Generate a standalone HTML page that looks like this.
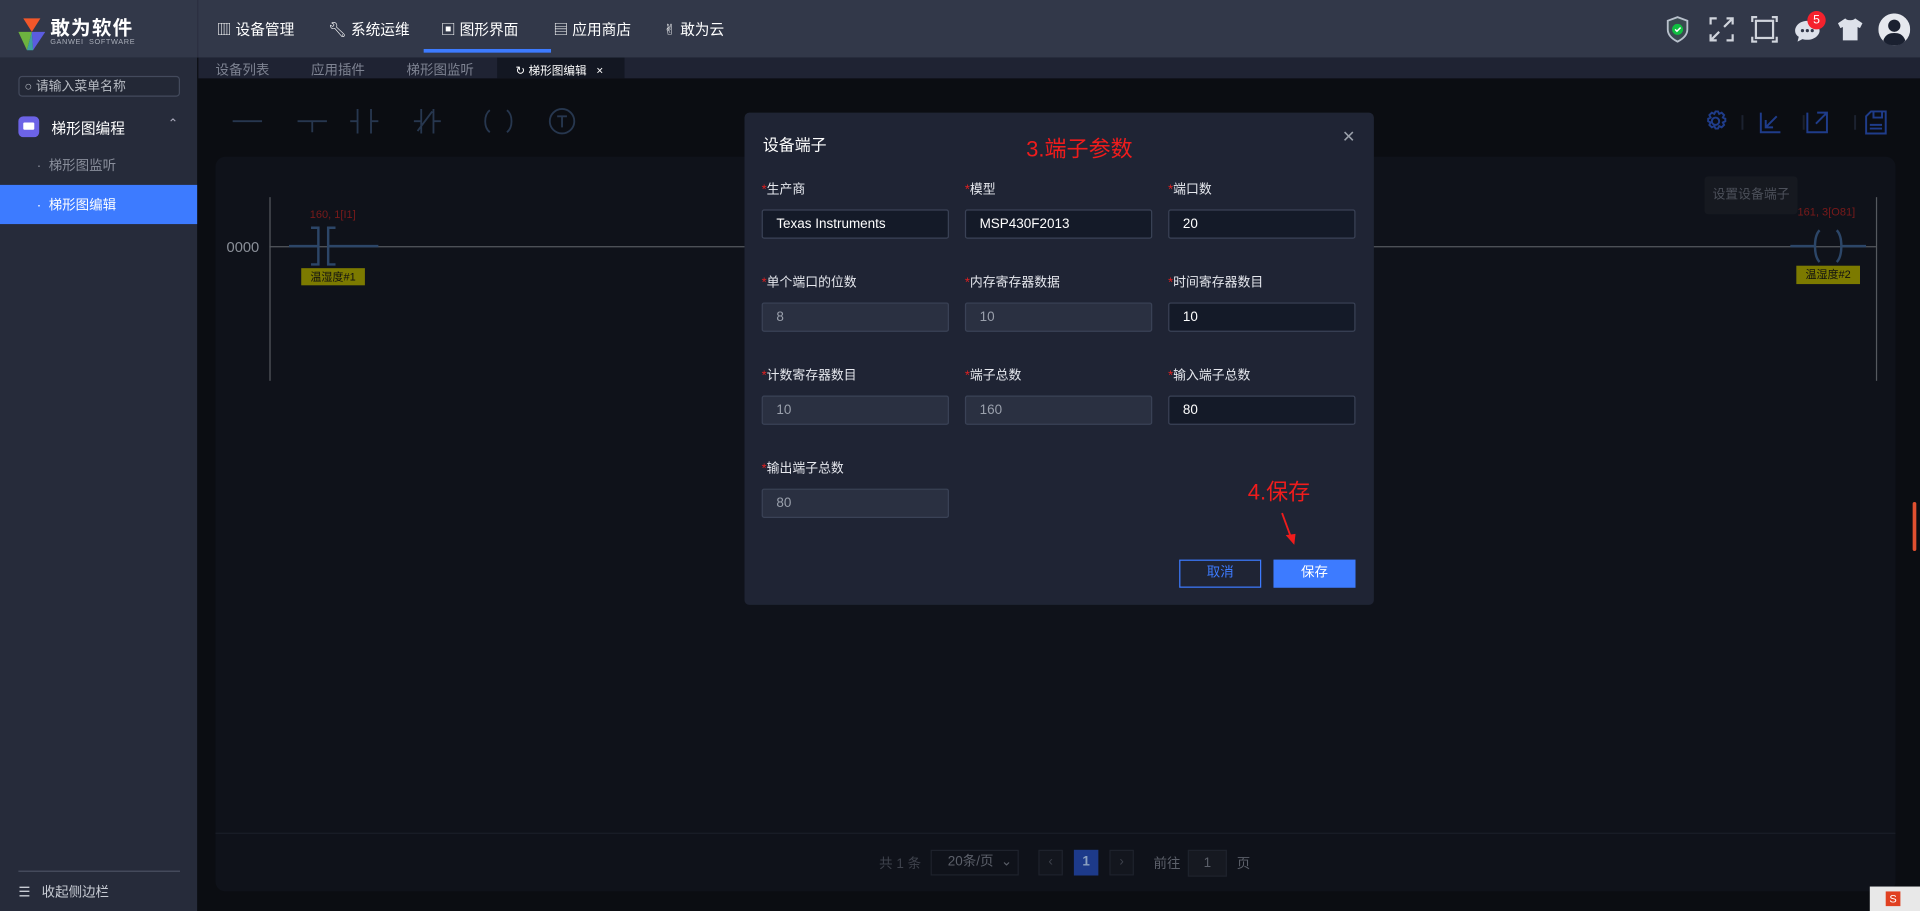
<!DOCTYPE html>
<html><head><meta charset="utf-8"><style>
*{box-sizing:border-box;margin:0;padding:0}
html,body{width:1920px;height:911px;overflow:hidden;background:#0b0d12;font-family:"Liberation Sans","Noto Sans CJK SC",sans-serif}
#w{position:absolute;left:0;top:0;width:1568px;height:744px;transform:scale(1.22449);transform-origin:0 0;background:#0b0d12;overflow:hidden}
.a{position:absolute}
.t{position:absolute;white-space:nowrap}
.nav{color:#fff;font-size:12px;top:15px}
.lab{font-size:10.5px;color:#e6e8ee}
.lab b{color:#e02020;font-weight:normal}
.in{position:absolute;width:153px;height:24px;border:1px solid #3a4256;border-radius:2px;font-size:11px;padding-left:11px;line-height:22px}
.ed{background:#141a28;color:#fff}
.ds{background:#2a3041;color:#9aa0ac}
</style></head><body><div id="w">
<!-- top bar -->
<div class="a" style="left:0;top:0;width:1568px;height:47px;background:#323849"></div>
<div class="a" style="left:161px;top:0;width:1px;height:47px;background:#2b3040"></div>
<svg class="a" style="left:15px;top:13px" width="22" height="30" viewBox="0 0 22 30"><polygon points="4,2 18,2 11,13" fill="#f2572a"/><polygon points="0,13 11,13 7,28" fill="#6db33f"/><polygon points="11,13 22,13 12,28" fill="#5b5ce0"/><polygon points="7,28 11,13 12,28" fill="#3ea0a0"/></svg>
<div class="t" style="left:41px;top:9px;color:#fff;font-size:16px;font-weight:bold;letter-spacing:1px">敢为软件</div>
<div class="t" style="left:41px;top:32px;color:#a8adb8;font-size:6px;letter-spacing:.5px">GANWEI&nbsp; SOFTWARE</div>
<div class="t nav" style="left:177px">▥ 设备管理</div>
<div class="t nav" style="left:268px">🔧︎ 系统运维</div>
<div class="t nav" style="left:360px">▣ 图形界面</div>
<div class="t nav" style="left:452px">▤ 应用商店</div>
<div class="t nav" style="left:542px">✌︎ 敢为云</div>
<div class="a" style="left:346px;top:40px;width:104px;height:3px;background:#3d7bff"></div>
<!-- right icons -->
<svg class="a" style="left:1360px;top:13px" width="20" height="22" viewBox="0 0 20 22"><path d="M10 1 L18 4 V11 C18 16 14 19 10 21 C6 19 2 16 2 11 V4 Z" fill="#3a4a50" stroke="#b8c0cc" stroke-width="1.5"/><circle cx="10" cy="11" r="4.5" fill="#10c040"/><path d="M8 11 l1.5 1.5 3-3" stroke="#fff" fill="none" stroke-width="1.2"/></svg>
<svg class="a" style="left:1395px;top:13px" width="22" height="22" viewBox="0 0 22 22" fill="none" stroke="#d0d4dc" stroke-width="1.8"><path d="M2 7V2h5M15 2h5v5M20 15v5h-5M7 20H2v-5M13 9l6-6M9 13l-6 6"/></svg>
<svg class="a" style="left:1430px;top:13px" width="22" height="22" viewBox="0 0 22 22" fill="none" stroke="#d0d4dc" stroke-width="1.8"><rect x="4" y="4" width="14" height="14"/><path d="M1 5V1h4M17 1h4v4M21 17v4h-4M5 21H1v-4"/></svg>
<svg class="a" style="left:1465px;top:14px" width="22" height="22" viewBox="0 0 22 22"><path d="M11 3C5 3 1 7 1 11c0 2 1 4 3 5l-1 4 4-2c1 .3 2 .5 4 .5 6 0 10-4 10-7.5S17 3 11 3z" fill="#dde1ea"/><circle cx="7" cy="11" r="1.3" fill="#323849"/><circle cx="11" cy="11" r="1.3" fill="#323849"/><circle cx="15" cy="11" r="1.3" fill="#323849"/></svg>
<div class="a" style="left:1476px;top:9px;width:15px;height:15px;border-radius:50%;background:#f5222d;color:#fff;font-size:10px;text-align:center;line-height:15px">5</div>
<svg class="a" style="left:1500px;top:14px" width="22" height="20" viewBox="0 0 22 20"><path d="M7 1 L1 5 L3 9 L5 8 V19 H17 V8 L19 9 L21 5 L15 1 C14 3 8 3 7 1Z" fill="#dde1ea"/></svg>
<svg class="a" style="left:1534px;top:11px" width="26" height="26" viewBox="0 0 26 26"><circle cx="13" cy="13" r="13" fill="#e6e8ee"/><circle cx="13" cy="10" r="5" fill="#1a2030"/><path d="M4 22c2-5 5-6 9-6s7 1 9 6c-2 3-5 4-9 4s-7-1-9-4z" fill="#1a2030"/></svg>
<!-- sidebar -->
<div class="a" style="left:0;top:47px;width:161px;height:697px;background:#262b3a"></div>
<div class="a" style="left:15px;top:62px;width:132px;height:17px;border:1px solid #434a5c;border-radius:3px;background:#232836"></div>
<div class="t" style="left:20px;top:63px;color:#b8bcc4;font-size:10.5px">○ 请输入菜单名称</div>
<div class="a" style="left:15px;top:95px;width:17px;height:17px;border-radius:4px;background:#6c63e6"></div>
<div class="a" style="left:19px;top:100px;width:9px;height:6px;border-radius:1px;background:#fff"></div>
<div class="t" style="left:42px;top:96px;color:#fff;font-size:12px">梯形图编程</div>
<div class="t" style="left:137px;top:96px;color:#aab;font-size:10px">⌃</div>
<div class="t" style="left:30px;top:127px;color:#8a8f9c;font-size:11px">·&nbsp; 梯形图监听</div>
<div class="a" style="left:0;top:151px;width:161px;height:32px;background:#3d7bff"></div>
<div class="t" style="left:30px;top:159px;color:#fff;font-size:11px">·&nbsp; 梯形图编辑</div>
<div class="a" style="left:15px;top:711px;width:132px;height:1px;background:#4a5062"></div>
<div class="t" style="left:15px;top:720px;color:#c8ccd4;font-size:11px">☰&nbsp;&nbsp; 收起侧边栏</div>
<!-- tabs -->
<div class="a" style="left:162px;top:47px;width:1406px;height:17px;background:#1f2333"></div>
<div class="t" style="left:176px;top:49px;color:#7e8392;font-size:11px">设备列表</div>
<div class="t" style="left:254px;top:49px;color:#7e8392;font-size:11px">应用插件</div>
<div class="t" style="left:332px;top:49px;color:#7e8392;font-size:11px">梯形图监听</div>
<div class="a" style="left:406px;top:47px;width:104px;height:17px;background:#131722"></div>
<div class="t" style="left:421px;top:50px;color:#fff;font-size:9.5px">↻ 梯形图编辑&nbsp;&nbsp; ×</div>
<!-- toolbar -->
<svg class="a" style="left:186px;top:88px" width="300" height="22" viewBox="0 0 300 22" fill="none" stroke="#27374f" stroke-width="1.5"><path d="M4 11h24M57 11h24M69 11v9M106 1v20M100 11h6M117 1v20M117 11h6M158 1v20M168 1v20M152 11h6M168 11h6M155 19l12-16M214 2c-5 4-5 14 0 18M228 2c5 4 5 14 0 18"/><circle cx="273" cy="11" r="10"/><path d="M269 7h8M273 7v9"/></svg>
<svg class="a" style="left:1390px;top:88px" width="152" height="24" viewBox="0 0 152 24" fill="none" stroke="#1f3c8a" stroke-width="1.6"><circle cx="11" cy="11" r="3"/><path d="M11 3l2 0 1 2 2-1 2 2-1 2 2 1v2l-2 1 1 2-2 2-2-1-1 2h-2l-1-2-2 1-2-2 1-2-2-1v-2l2-1-1-2 2-2 2 1z"/><path d="M48 4v16h16M52 16l9-9M52 10v6h6M86 4v16h16V10M94 4h8v8M102 4l-9 9M138 3h12v18h-16V7zM140 3v5h7V3M137 14h10M137 17h10"/><path d="M33 6v12M83 6v12M125 6v12" stroke="#1c2230"/></svg>
<!-- canvas -->
<div class="a" style="left:176px;top:128px;width:1372px;height:600px;background:#0f121a;border-radius:8px"></div>
<div class="a" style="left:176px;top:680px;width:1372px;height:1px;background:#1a1e28"></div>
<div class="a" style="left:220px;top:161px;width:1px;height:150px;background:#55595f"></div>
<div class="a" style="left:220px;top:201px;width:1312px;height:1px;background:#55595f"></div>
<div class="a" style="left:1532px;top:161px;width:1px;height:150px;background:#55595f"></div>
<div class="t" style="left:185px;top:195px;color:#8a8f98;font-size:12px">0000</div>
<svg class="a" style="left:236px;top:185px" width="80" height="32" viewBox="0 0 80 32" fill="none" stroke="#2c4668" stroke-width="2"><path d="M0 16h24M18 1h6v30h-6M38 1h-6v30h6M32 16h41"/></svg>
<div class="t" style="left:253px;top:170px;color:#7a1a1a;font-size:9px">160, 1[I1]</div>
<div class="a" style="left:246px;top:219px;width:52px;height:14px;background:#7c7a00;color:#111;font-size:9px;text-align:center;line-height:14px">温湿度#1</div>
<svg class="a" style="left:1462px;top:185px" width="62" height="32" viewBox="0 0 62 32" fill="none" stroke="#2c4668" stroke-width="2"><path d="M0 16h20M42 16h20M24 3c-5 5-5 21 0 26M38 3c5 5 5 21 0 26"/></svg>
<div class="t" style="left:1468px;top:168px;color:#7a1a1a;font-size:9px">161, 3[O81]</div>
<div class="a" style="left:1467px;top:217px;width:52px;height:15px;background:#7c7a00;color:#111;font-size:9px;text-align:center;line-height:15px">温湿度#2</div>
<div class="a" style="left:1392px;top:144px;width:76px;height:31px;background:#161920;border-radius:3px;color:#4c505a;font-size:10.5px;text-align:center;line-height:31px">设置设备端子</div>
<!-- pagination -->
<div class="t" style="left:718px;top:697px;color:#3e424c;font-size:11px">共 1 条</div>
<div class="a" style="left:760px;top:694px;width:72px;height:21px;border:1px solid #1e222c;color:#5c606a;font-size:11px;line-height:19px;padding-left:13px">20条/页 &nbsp;⌄</div>
<div class="a" style="left:848px;top:694px;width:20px;height:21px;border:1px solid #1e222c;background:#13161e;color:#3e424c;font-size:11px;text-align:center;line-height:19px">‹</div>
<div class="a" style="left:877px;top:694px;width:20px;height:21px;background:#1d3a8a;color:#8ba0c0;font-size:11px;text-align:center;line-height:21px;font-weight:bold">1</div>
<div class="a" style="left:906px;top:694px;width:20px;height:21px;border:1px solid #1e222c;background:#13161e;color:#3e424c;font-size:11px;text-align:center;line-height:19px">›</div>
<div class="t" style="left:942px;top:697px;color:#5c606a;font-size:11px">前往</div>
<div class="a" style="left:970px;top:694px;width:32px;height:22px;background:#161921;border:1px solid #1e222c;color:#5c606a;font-size:11px;text-align:center;line-height:20px">1</div>
<div class="t" style="left:1010px;top:697px;color:#5c606a;font-size:11px">页</div>
<div class="a" style="left:1562px;top:410px;width:3px;height:40px;background:#e05030;border-radius:2px"></div>
<div class="a" style="left:1527px;top:724px;width:41px;height:20px;background:#e8e8e8"></div>
<div class="a" style="left:1540px;top:728px;width:12px;height:12px;background:#e04020;color:#fff;font-size:9px;text-align:center;line-height:12px">S</div>
<!-- modal -->
<div class="a" style="left:608px;top:92px;width:514px;height:402px;background:#1f2434;border-radius:4px"></div>
<div class="t" style="left:623px;top:108px;color:#fff;font-size:13px">设备端子</div>
<div class="t" style="left:838px;top:108px;color:#f01c1c;font-size:18px">3.端子参数</div>
<div class="t" style="left:1096px;top:104px;color:#9aa0aa;font-size:13px">✕</div>

<div class="t lab" style="left:622px;top:147px"><b>*</b>生产商</div>
<div class="t lab" style="left:788px;top:147px"><b>*</b>模型</div>
<div class="t lab" style="left:954px;top:147px"><b>*</b>端口数</div>
<div class="in ed" style="left:622px;top:171px">Texas Instruments</div>
<div class="in ed" style="left:788px;top:171px">MSP430F2013</div>
<div class="in ed" style="left:954px;top:171px">20</div>

<div class="t lab" style="left:622px;top:223px"><b>*</b>单个端口的位数</div>
<div class="t lab" style="left:788px;top:223px"><b>*</b>内存寄存器数据</div>
<div class="t lab" style="left:954px;top:223px"><b>*</b>时间寄存器数目</div>
<div class="in ds" style="left:622px;top:247px">8</div>
<div class="in ds" style="left:788px;top:247px">10</div>
<div class="in ed" style="left:954px;top:247px">10</div>

<div class="t lab" style="left:622px;top:299px"><b>*</b>计数寄存器数目</div>
<div class="t lab" style="left:788px;top:299px"><b>*</b>端子总数</div>
<div class="t lab" style="left:954px;top:299px"><b>*</b>输入端子总数</div>
<div class="in ds" style="left:622px;top:323px">10</div>
<div class="in ds" style="left:788px;top:323px">160</div>
<div class="in ed" style="left:954px;top:323px">80</div>

<div class="t lab" style="left:622px;top:375px"><b>*</b>输出端子总数</div>
<div class="in ds" style="left:622px;top:399px">80</div>

<div class="t" style="left:1019px;top:388px;color:#f01c1c;font-size:18px">4.保存</div>
<svg class="a" style="left:1044px;top:418px" width="16" height="28" viewBox="0 0 16 28"><path d="M3 1 L10 20" stroke="#f01c1c" stroke-width="1.5"/><polygon points="6,19 14,18 13,27" fill="#f01c1c"/></svg>
<div class="a" style="left:963px;top:457px;width:67px;height:23px;border:1px solid #3d7bff;color:#3d7bff;font-size:11px;text-align:center;line-height:21px">取消</div>
<div class="a" style="left:1040px;top:457px;width:67px;height:23px;background:#3d7bff;color:#fff;font-size:11px;text-align:center;line-height:23px">保存</div>
</div></body></html>
